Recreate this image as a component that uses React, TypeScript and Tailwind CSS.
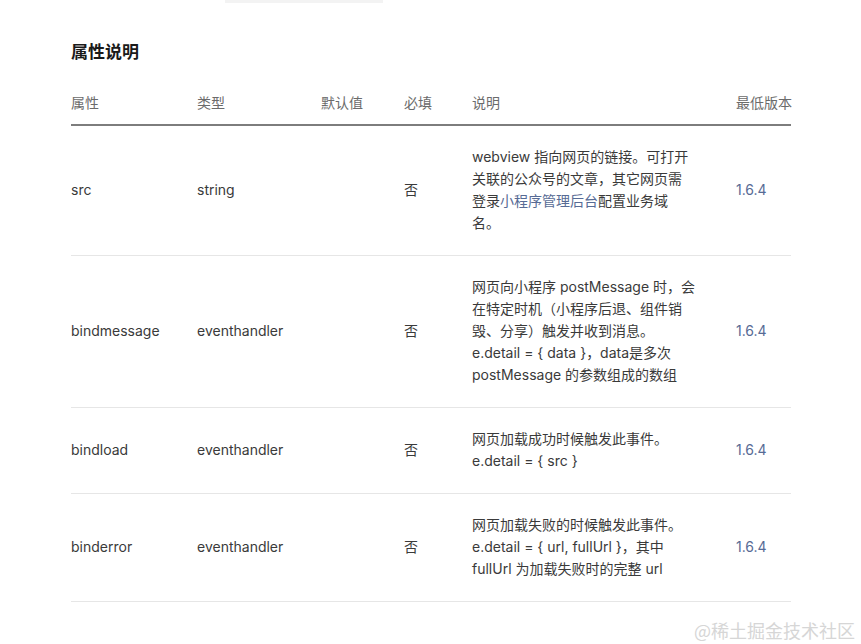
import React from "react";

const font = { fontFamily: 'Inter, "Noto Sans CJK SC", sans-serif' };

type Row = {
  name: string;
  type: string;
  req: string;
  desc: React.ReactNode;
  ver: string;
};

const rows: Row[] = [
  {
    name: "src",
    type: "string",
    req: "否",
    desc: (
      <>
        webview 指向网页的链接。可打开关联的公众号的文章，其它网页需登录
        <span className="text-[#576b95]">小程序管理后台</span>配置业务域名。
      </>
    ),
    ver: "1.6.4",
  },
  {
    name: "bindmessage",
    type: "eventhandler",
    req: "否",
    desc: (
      <>
        网页向小程序 postMessage 时，会在特定时机（小程序后退、组件销毁、分享）触发并收到消息。
        <br />
        e.detail = {"{ data }"}，data是多次postMessage 的参数组成的数组
      </>
    ),
    ver: "1.6.4",
  },
  {
    name: "bindload",
    type: "eventhandler",
    req: "否",
    desc: (
      <>
        网页加载成功时候触发此事件。
        <br />
        e.detail = {"{ src }"}
      </>
    ),
    ver: "1.6.4",
  },
  {
    name: "binderror",
    type: "eventhandler",
    req: "否",
    desc: (
      <>
        网页加载失败的时候触发此事件。
        <br />
        e.detail = {"{ url, fullUrl }"}，其中fullUrl 为加载失败时的完整 url
      </>
    ),
    ver: "1.6.4",
  },
];

const cols = "grid grid-cols-[126px_124px_83px_68px_264px_55px]";

export default function App() {
  return (
    <div className="relative w-[861px] h-[644px] bg-white overflow-hidden" style={font}>
      <div className="absolute left-[225px] top-0 w-[158px] h-[3px] bg-[#f3f3f3]" />
      <div className="pl-[71px] pt-[41px]">
        <h2 className="text-[17px] leading-[22px] font-bold text-[#1a1a1a]">属性说明</h2>
        <div className="w-[720px] mt-[29px]">
          <div className={`${cols} whitespace-nowrap border-b-2 border-[#7d7d7d] pb-[10px] text-[14px] leading-[22px] text-[#6b6b6b]`}>
            <div>属性</div>
            <div>类型</div>
            <div>默认值</div>
            <div>必填</div>
            <div>说明</div>
            <div>最低版本</div>
          </div>
          {rows.map((r) => (
            <div
              key={r.name}
              className={`${cols} items-center border-b border-[#e6e6e6] pt-[20px] pb-[21px] text-[14px] leading-[22px] text-[#3a3a3a]`}
            >
              <div>{r.name}</div>
              <div>{r.type}</div>
              <div></div>
              <div>{r.req}</div>
              <div className="w-[223px]">{r.desc}</div>
              <div className="text-[#576b95]">{r.ver}</div>
            </div>
          ))}
        </div>
      </div>
      <div className="absolute right-[6px] bottom-[2px] text-[18px] leading-[24px] text-[#d6d6d6]" style={{ fontFamily: '"Noto Sans CJK SC", sans-serif' }}>
        @稀土掘金技术社区
      </div>
    </div>
  );
}
